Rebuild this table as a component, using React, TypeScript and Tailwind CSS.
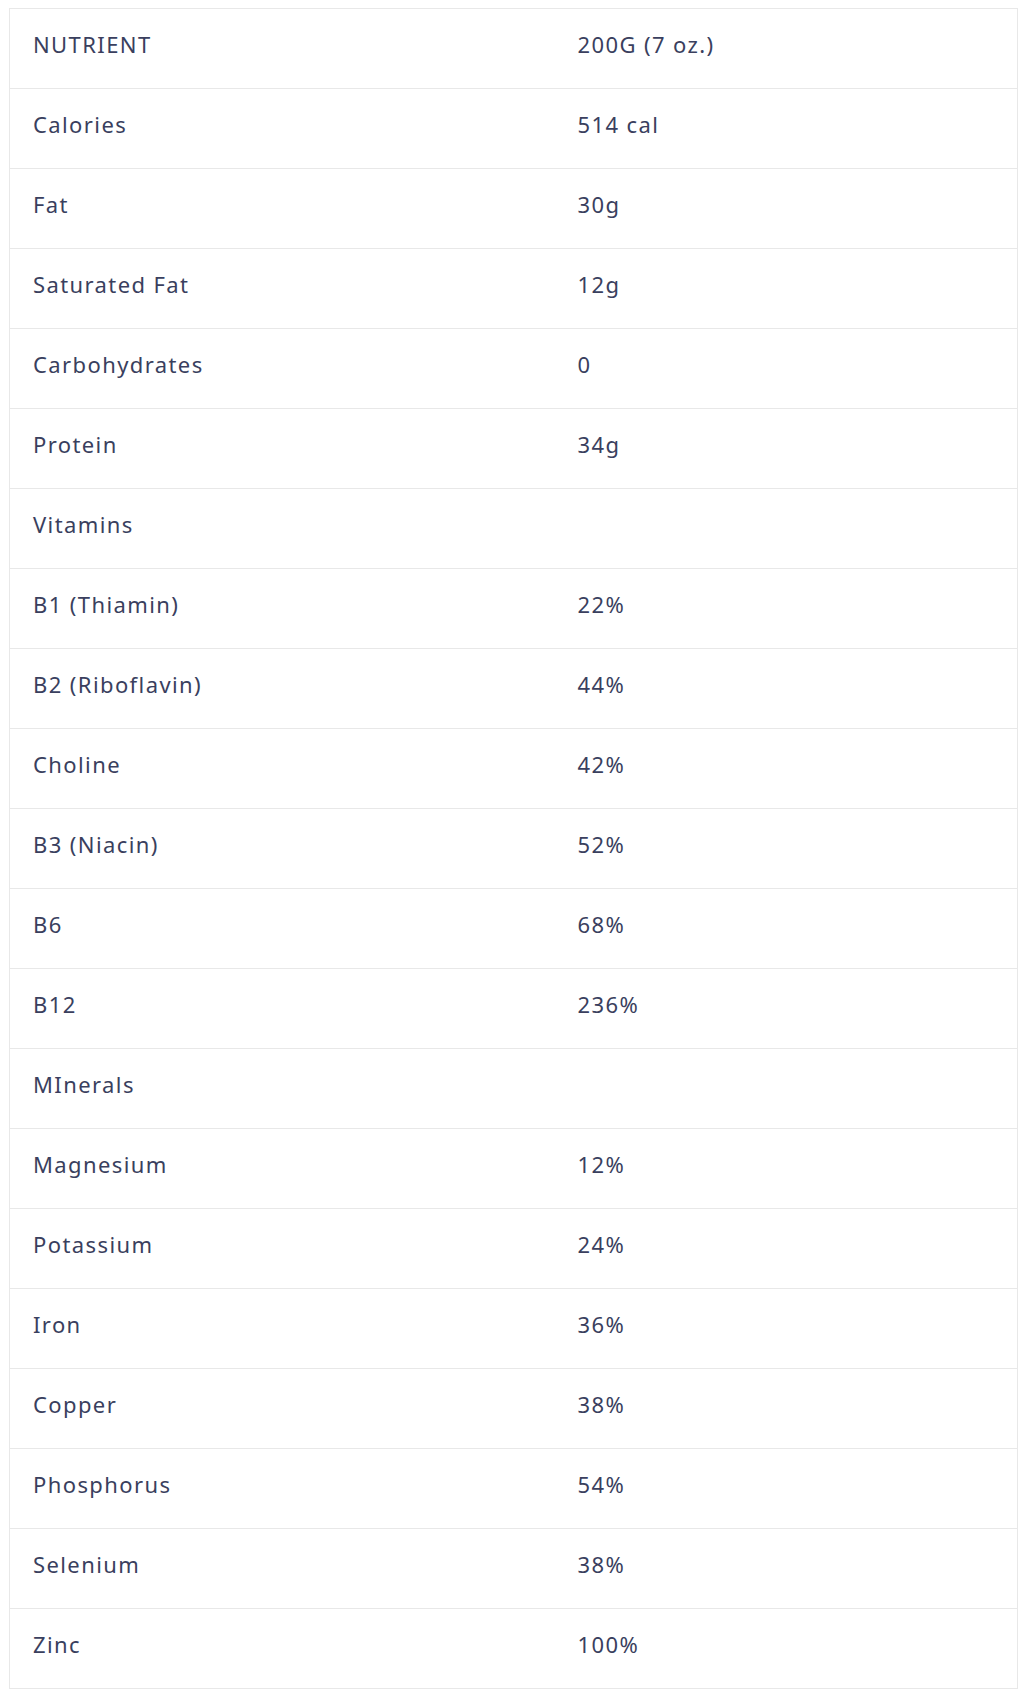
const rows: [string, string][] = [
  ["NUTRIENT", "200G (7 oz.)"],
  ["Calories", "514 cal"],
  ["Fat", "30g"],
  ["Saturated Fat", "12g"],
  ["Carbohydrates", "0"],
  ["Protein", "34g"],
  ["Vitamins", ""],
  ["B1 (Thiamin)", "22%"],
  ["B2 (Riboflavin)", "44%"],
  ["Choline", "42%"],
  ["B3 (Niacin)", "52%"],
  ["B6", "68%"],
  ["B12", "236%"],
  ["MInerals", ""],
  ["Magnesium", "12%"],
  ["Potassium", "24%"],
  ["Iron", "36%"],
  ["Copper", "38%"],
  ["Phosphorus", "54%"],
  ["Selenium", "38%"],
  ["Zinc", "100%"],
];

export default function App() {
  return (
    <div className="bg-white pt-2 pl-[9px] pr-[11px] pb-4" style={{ fontFamily: '"Noto Sans", "Open Sans", sans-serif' }}>
      <table className="w-full border-collapse border border-[#e8e8e8] text-[22px] tracking-[1.4px] text-[#3a3f5e]">
        <tbody>
          {rows.map(([a, b], i) => (
            <tr key={i} className="h-[80px] border-b border-[#e8e8e8]">
              <td className="w-[545px] pl-[23px] align-middle pb-[9px]">{a}</td>
              <td className="pl-[23px] align-middle pb-[9px]">{b}</td>
            </tr>
          ))}
        </tbody>
      </table>
    </div>
  );
}
